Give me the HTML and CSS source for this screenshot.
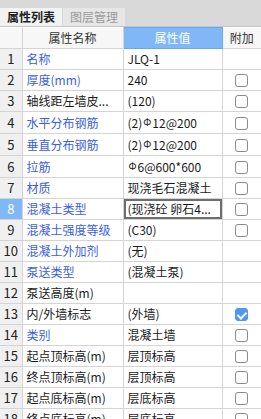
FILE: index.html
```html
<!DOCTYPE html>
<html lang="zh-CN">
<head>
    <meta charset="UTF-8">
    <title>属性列表</title>
    <link rel="stylesheet" href="styles.css">
</head>
<body>
    <div class="tabs">
        <div class="tab active">属性列表</div>
        <div class="tab">图层管理</div>
    </div>
    <table class="grid">
        <colgroup>
            <col class="c-num">
            <col class="c-name">
            <col class="c-val">
            <col class="c-add">
        </colgroup>
        <thead>
            <tr>
                <th class="num"></th>
                <th>属性名称</th>
                <th class="hl">属性值</th>
                <th>附加</th>
            </tr>
        </thead>
        <tbody>
            <tr><td class="num">1</td><td class="link">名称</td><td>JLQ-1</td><td></td></tr>
            <tr><td class="num">2</td><td class="link">厚度(mm)</td><td>240</td><td><span class="box"></span></td></tr>
            <tr><td class="num">3</td><td>轴线距左墙皮...</td><td>(120)</td><td><span class="box"></span></td></tr>
            <tr><td class="num">4</td><td class="link">水平分布钢筋</td><td>(2)<span class="bar">Φ</span>12@200</td><td><span class="box"></span></td></tr>
            <tr><td class="num">5</td><td class="link">垂直分布钢筋</td><td>(2)<span class="bar">Φ</span>12@200</td><td><span class="box"></span></td></tr>
            <tr><td class="num">6</td><td class="link">拉筋</td><td><span class="bar">Φ</span>6@600*600</td><td><span class="box"></span></td></tr>
            <tr><td class="num">7</td><td class="link">材质</td><td>现浇毛石混凝土</td><td><span class="box"></span></td></tr>
            <tr class="sel"><td class="num">8</td><td class="link">混凝土类型</td><td class="edit">(现浇砼 卵石4...</td><td><span class="box"></span></td></tr>
            <tr><td class="num">9</td><td class="link">混凝土强度等级</td><td>(C30)</td><td><span class="box"></span></td></tr>
            <tr><td class="num">10</td><td class="link">混凝土外加剂</td><td>(无)</td><td></td></tr>
            <tr><td class="num">11</td><td class="link">泵送类型</td><td>(混凝土泵)</td><td></td></tr>
            <tr><td class="num">12</td><td>泵送高度(m)</td><td></td><td></td></tr>
            <tr><td class="num">13</td><td>内/外墙标志</td><td>(外墙)</td><td><span class="box on"></span></td></tr>
            <tr><td class="num">14</td><td class="link">类别</td><td>混凝土墙</td><td><span class="box"></span></td></tr>
            <tr><td class="num">15</td><td>起点顶标高(m)</td><td>层顶标高</td><td><span class="box"></span></td></tr>
            <tr><td class="num">16</td><td>终点顶标高(m)</td><td>层顶标高</td><td><span class="box"></span></td></tr>
            <tr><td class="num">17</td><td>起点底标高(m)</td><td>层底标高</td><td><span class="box"></span></td></tr>
            <tr><td class="num">18</td><td>终点底标高(m)</td><td>层底标高</td><td><span class="box"></span></td></tr>
        </tbody>
    </table>
</body>
</html>
```

FILE: styles.css
```css
body {
    margin: 0;
    width: 261px;
    height: 419px;
    overflow: hidden;
    background-color: #ffffff;
    font-family: "Noto Sans CJK SC", "Noto Sans", sans-serif;
    font-size: 12px;
    color: #1a1a1a;
}

.tabs {
    display: flex;
    height: 27px;
    padding-top: 8px;
    box-sizing: border-box;
    background-color: #d9d9d9;
    border-bottom: 1px solid #c4c4c4;
}

.tab {
    width: 62px;
    margin-right: 1px;
    line-height: 18px;
    text-align: center;
    font-size: 12px;
    color: #9a9a9a;
    background-color: #e6e6e6;
}

.tab.active {
    color: #222222;
    font-weight: bold;
    background-color: #f2f2f2;
}

.grid {
    border-collapse: collapse;
    table-layout: fixed;
    width: 261px;
}

.c-num { width: 22px; }
.c-name { width: 101px; }
.c-val { width: 99px; }
.c-add { width: 39px; }

.grid th,
.grid td {
    height: 20px;
    padding: 0 0 0 4px;
    border: 1px solid #d4d4d4;
    white-space: nowrap;
    overflow: hidden;
    text-align: left;
    font-weight: normal;
    line-height: 20px;
}

.grid tr:first-child td {
    border-top: none;
}

.grid th {
    text-align: center;
    padding: 0;
    background-color: #f7f7f7;
    color: #333333;
    border-top: none;
}

.grid th.hl {
    background-color: #80b7f6;
    color: #ffffff;
    border: 1px solid #6aa6ee;
}

.grid td.num {
    padding: 0;
    text-align: center;
    font-size: 13px;
    background-color: #f0f0f0;
    color: #222222;
}

.grid td:first-child,
.grid th:first-child {
    border-left: none;
}

.grid td:last-child,
.grid th:last-child {
    border-right: none;
    text-align: center;
    padding: 0;
}

.link {
    color: #3b5ee0;
}

.sel td.num {
    background-color: #80b7f6;
    color: #ffffff;
}

.grid td.edit {
    box-shadow: inset 0 0 0 2px #6e6e6e;
}

.bar {
    font-size: 10px;
    vertical-align: 2px;
    margin: 0 1px;
}

.box {
    display: inline-block;
    width: 11px;
    height: 11px;
    border: 1px solid #8a8a8a;
    border-radius: 3px;
    vertical-align: -2px;
    background-color: #ffffff;
}

.box.on {
    background-color: #4f97f2;
    border-color: #4f97f2;
    position: relative;
}

.box.on::after {
    content: "";
    position: absolute;
    left: 3px;
    top: 1px;
    width: 4px;
    height: 7px;
    border: solid #ffffff;
    border-width: 0 2px 2px 0;
    transform: rotate(45deg);
}
```
